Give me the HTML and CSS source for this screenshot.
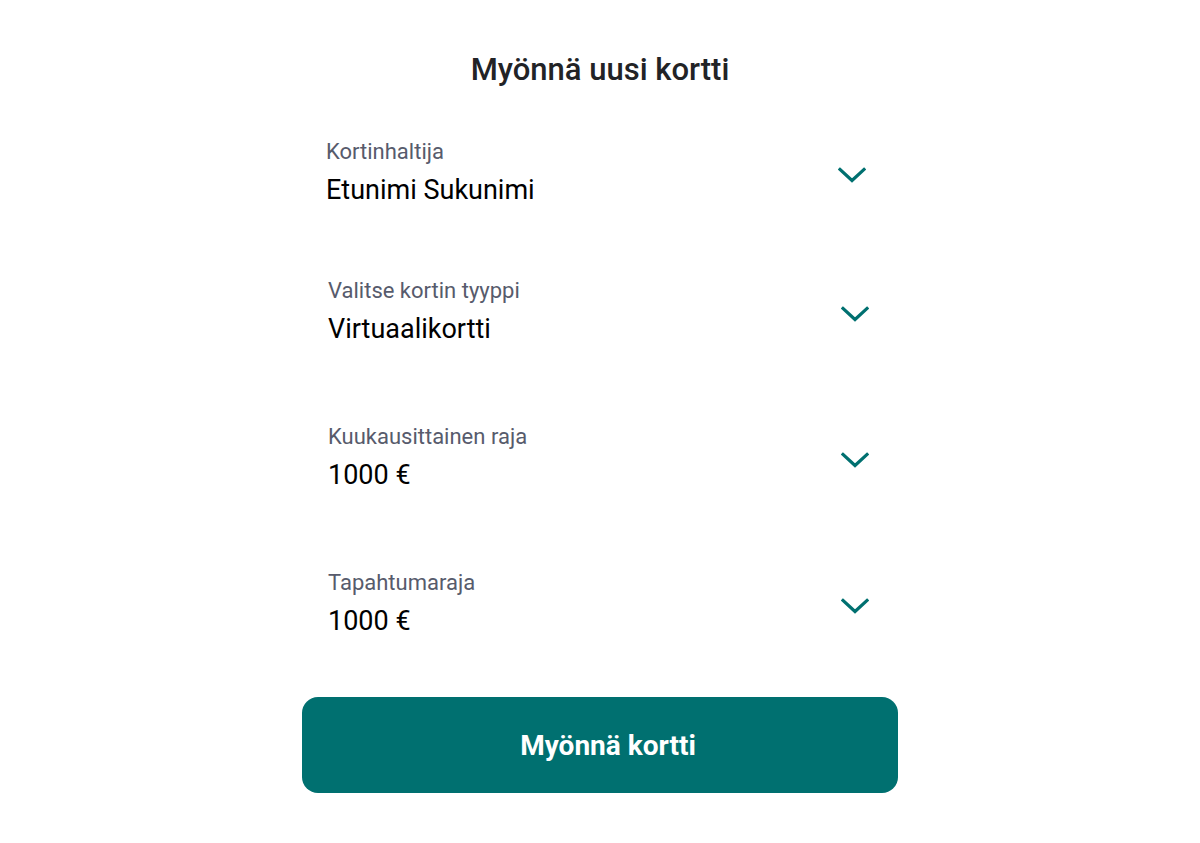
FILE: index.html
```html
<!DOCTYPE html>
<html lang="fi">
<head>
<meta charset="utf-8">
<title>Myönnä uusi kortti</title>
<link rel="stylesheet" href="styles.css">
</head>
<body>
<main class="page">
  <h1 class="title">Myönnä uusi kortti</h1>
  <div class="form">
    <div class="field field--first">
      <div class="field-text">
        <div class="field-label">Kortinhaltija</div>
        <div class="field-value">Etunimi Sukunimi</div>
      </div>
      <svg class="chevron" width="28" height="16" viewBox="0 0 28 16"><path d="M2 2.5 L14 13.5 L26 2.5" fill="none" stroke="#007070" stroke-width="3.2" stroke-linecap="square"/></svg>
    </div>
    <div class="field">
      <div class="field-text">
        <div class="field-label">Valitse kortin tyyppi</div>
        <div class="field-value">Virtuaalikortti</div>
      </div>
      <svg class="chevron" width="28" height="16" viewBox="0 0 28 16"><path d="M2 2.5 L14 13.5 L26 2.5" fill="none" stroke="#007070" stroke-width="3.2" stroke-linecap="square"/></svg>
    </div>
    <div class="field">
      <div class="field-text">
        <div class="field-label">Kuukausittainen raja</div>
        <div class="field-value">1000 €</div>
      </div>
      <svg class="chevron" width="28" height="16" viewBox="0 0 28 16"><path d="M2 2.5 L14 13.5 L26 2.5" fill="none" stroke="#007070" stroke-width="3.2" stroke-linecap="square"/></svg>
    </div>
    <div class="field">
      <div class="field-text">
        <div class="field-label">Tapahtumaraja</div>
        <div class="field-value">1000 €</div>
      </div>
      <svg class="chevron" width="28" height="16" viewBox="0 0 28 16"><path d="M2 2.5 L14 13.5 L26 2.5" fill="none" stroke="#007070" stroke-width="3.2" stroke-linecap="square"/></svg>
    </div>
    <button class="submit" type="button">Myönnä kortti</button>
  </div>
</main>
</body>
</html>
```
FILE: styles.css
```css
html, body {
  margin: 0;
  padding: 0;
  background: #ffffff;
}
body {
  font-family: Roboto, "Noto Sans", sans-serif;
  color: #000;
}
.page {
  width: 596px;
  margin: 0 auto;
  padding-top: 52px;
  display: flex;
  flex-direction: column;
}
.title {
  margin: 0;
  font-size: 31px;
  line-height: 36px;
  font-weight: 500;
  color: #222326;
  text-align: center;
}
.form {
  display: flex;
  flex-direction: column;
  gap: 82px;
  margin-top: 52px;
}
.field {
  display: flex;
  align-items: center;
  justify-content: space-between;
  padding: 0 29px 0 26px;
  height: 64px;
}
.field--first {
  padding-left: 24px;
  padding-right: 32px;
  margin-bottom: -7px;
}
.field-text {
  display: flex;
  flex-direction: column;
  gap: 11px;
  padding-top: 1px;
}
.field-label {
  font-size: 22px;
  line-height: 24px;
  color: #575b6c;
}
.field-value {
  font-size: 27px;
  line-height: 30px;
  color: #000;
}
.chevron {
  display: block;
  margin-top: 6px;
}
.submit {
  margin-top: -20px;
  height: 96px;
  padding: 0 0 0 16px;
  border: none;
  border-radius: 16px;
  background: #007070;
  color: #ffffff;
  font-family: Roboto, "Noto Sans", sans-serif;
  font-size: 28px;
  font-weight: 700;
  cursor: pointer;
}
```
